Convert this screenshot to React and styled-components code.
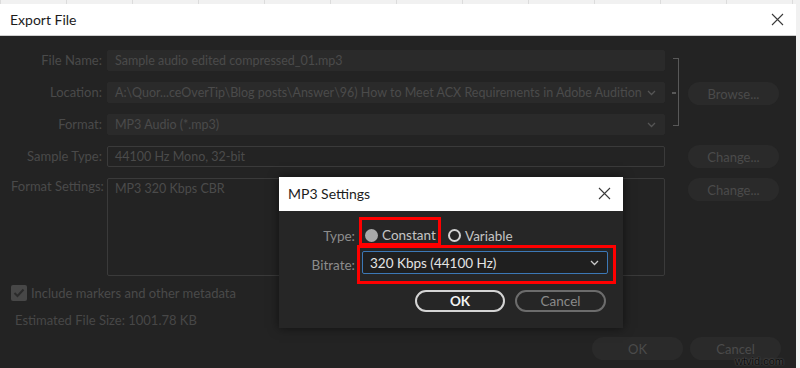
import styled, { createGlobalStyle } from "styled-components";

const GlobalStyle = createGlobalStyle`
  html, body {
    margin: 0;
    padding: 0;
  }
  body {
    width: 800px;
    height: 368px;
    overflow: hidden;
    background: #f1f1f1;
    background-image: repeating-linear-gradient(90deg, #dcdcdc 0 1px, transparent 1px 66px);
    font-family: Lato, "Noto Sans", sans-serif;
  }
`;

const Window = styled.div`
  position: relative;
  margin-top: 4px;
  width: 796px;
  height: 364px;
  background: #232323;
  display: flex;
  flex-direction: column;
`;

const TitleBar = styled.div`
  flex: 0 0 auto;
  box-sizing: border-box;
  height: ${(p) => p.$h || 32}px;
  background: #fff;
  border-bottom: 1px solid ${(p) => p.$line || "#cfcfcf"};
  display: flex;
  align-items: center;
  justify-content: space-between;
  padding: 0 ${(p) => p.$pr || 12}px 0 ${(p) => p.$pl || 10}px;
`;

const Title = styled.span`
  font-family: Lato, "Noto Sans", sans-serif;
  font-size: 14px;
  color: #1c1c1c;
`;

const Close = () => (
  <svg width="13" height="13" viewBox="0 0 13 13">
    <path d="M1 1 L12 12 M12 1 L1 12" stroke="#3a3a3a" strokeWidth="1.1" fill="none" />
  </svg>
);

const Chevron = ({ color = "#555" }) => (
  <svg width="9" height="6" viewBox="0 0 9 6">
    <polyline points="1,1 4.5,4.5 8,1" stroke={color} strokeWidth="1.3" fill="none" />
  </svg>
);

const Body = styled.div`
  flex: 1;
  padding: 14px 17px 0 11px;
  display: flex;
  flex-direction: column;
`;

const FieldGrid = styled.div`
  display: grid;
  grid-template-columns: 96px 558px 23px 91px;
  grid-template-rows: 21px 21px 21px 21px 98px;
  row-gap: 11px;
`;

const Label = styled.div`
  grid-column: 1;
  text-align: right;
  padding-right: 5px;
  font-size: 13px;
  line-height: ${(p) => (p.$top ? "17px" : "21px")};
  align-self: ${(p) => (p.$top ? "start" : "center")};
  color: #4a4a4a;
  white-space: nowrap;
`;

const Field = styled.div`
  grid-column: 2;
  box-sizing: border-box;
  display: flex;
  align-items: ${(p) => (p.$area ? "flex-start" : "center")};
  justify-content: space-between;
  padding: ${(p) => (p.$area ? "2px 7px" : "0 8px 0 7px")};
  background: ${(p) => (p.$outlined ? "transparent" : "#2a2a2a")};
  border: 1px solid ${(p) => (p.$outlined ? "#3a3a3a" : "#2a2a2a")};
  border-radius: 2px;
  font-size: 12.5px;
  color: #4b4b4b;
  white-space: nowrap;
  overflow: hidden;
`;

const Bracket = styled.div`
  grid-column: 3;
  grid-row: 1 / 4;
  position: relative;
  margin: 8px 0 9px 8px;
  width: 5px;
  border: 1.5px solid #585858;
  border-left: none;

  &::after {
    content: "";
    position: absolute;
    left: -1px;
    top: 50%;
    width: 4px;
    height: 1.5px;
    background: #585858;
  }
`;

const PillButton = styled.div`
  grid-column: ${(p) => p.$col || "auto"};
  grid-row: ${(p) => p.$row || "auto"};
  align-self: start;
  box-sizing: border-box;
  width: 91px;
  height: 23px;
  margin-top: ${(p) => p.$mt || 0}px;
  border-radius: 12px;
  background: #2a2a2a;
  color: #4b4b4b;
  font-size: 13px;
  display: flex;
  align-items: center;
  justify-content: center;
`;

const CheckRow = styled.div`
  margin-top: 9px;
  height: 16px;
  display: flex;
  align-items: center;
  gap: 4px;
  font-size: 13px;
  color: #4a4a4a;
`;

const CheckBox = styled.div`
  width: 16px;
  height: 16px;
  border-radius: 2px;
  background: #474747;
  display: flex;
  align-items: center;
  justify-content: center;
`;

const Estimate = styled.div`
  margin-top: 11px;
  padding-left: 4px;
  line-height: 16px;
  font-size: 13px;
  color: #474747;
`;

const Footer = styled.div`
  margin-top: 9px;
  margin-right: -2px;
  display: flex;
  justify-content: flex-end;
  gap: 7px;
`;

/* MP3 settings sub-dialog */

const Popup = styled.div`
  position: absolute;
  left: 279px;
  top: 173px;
  width: 344px;
  height: 151px;
  display: flex;
  flex-direction: column;
  background: #262626;
  box-shadow: 0 0 10px rgba(0, 0, 0, 0.55);
`;

const PopupBody = styled.div`
  padding: 6px 7px 0 0;
  display: grid;
  grid-template-columns: 78px 1fr;
  align-items: center;
`;

const PopupLabel = styled.div`
  text-align: right;
  padding-right: 2px;
  padding-top: ${(p) => p.$pt || 0}px;
  font-size: 13.5px;
  color: #8c8c8c;
`;

const Highlight = styled.div`
  box-sizing: border-box;
  border: 3px solid #f00;
  display: flex;
  align-items: center;
`;

const TypeHighlight = styled(Highlight)`
  width: 82px;
  height: 29px;
  margin-left: 2px;
  padding: 7px 0 0 3px;
  gap: 4px;
`;

const RateHighlight = styled(Highlight)`
  width: 259px;
  height: 39px;
  margin-top: -1px;
  padding: 3px 5px 7px 2px;
`;

const TypeRow = styled.div`
  display: flex;
  align-items: center;
`;

const Radio = styled.span`
  box-sizing: border-box;
  width: 13px;
  height: 13px;
  border-radius: 50%;
  background: ${(p) => (p.$checked ? "#a9a9a9" : "transparent")};
  border: ${(p) => (p.$checked ? "none" : "2px solid #d2d2d2")};
`;

const Option = styled.span`
  font-size: 13.5px;
  color: #c4c4c4;
`;

const VariableOption = styled.div`
  margin: 8px 0 0 7px;
  display: flex;
  align-items: center;
  gap: 4px;
`;

const Select = styled.div`
  box-sizing: border-box;
  flex: 1;
  height: 23px;
  border: 1px solid #3c78b6;
  border-radius: 2px;
  background: #1f1f1f;
  display: flex;
  align-items: center;
  justify-content: space-between;
  padding: 0 8px 0 7px;
  font-size: 13.5px;
  color: #e4e4e4;
`;

const PopupButtons = styled.div`
  grid-column: 1 / -1;
  justify-self: end;
  margin: 6px 10px 0 0;
  display: flex;
  gap: 10px;
`;

const OutlineButton = styled.div`
  box-sizing: border-box;
  width: ${(p) => p.$w}px;
  height: 22px;
  border-radius: 12px;
  border: 2px solid ${(p) => (p.$primary ? "#d4d4d4" : "#6c6c6c")};
  color: ${(p) => (p.$primary ? "#f2f2f2" : "#8a8a8a")};
  font-weight: ${(p) => (p.$primary ? 700 : 400)};
  font-size: 13.5px;
  display: flex;
  align-items: center;
  justify-content: center;
`;

const Watermark = styled.div`
  position: absolute;
  right: 12px;
  bottom: 1px;
  font-family: "Liberation Sans", Arial, sans-serif;
  font-size: 11px;
  color: #0c0c0c;
  text-shadow: 0 0 2px rgba(255, 255, 255, 0.35);
`;

export default function App() {
  return (
    <>
      <GlobalStyle />
      <Window>
        <TitleBar>
          <Title>Export File</Title>
          <Close />
        </TitleBar>
        <Body>
          <FieldGrid>
            <Label>File Name:</Label>
            <Field>Sample audio edited compressed_01.mp3</Field>
            <Bracket />

            <Label>Location:</Label>
            <Field>
              A:\Quor...ceOverTip\Blog posts\Answer\96) How to Meet ACX Requirements in Adobe Audition
              <Chevron />
            </Field>
            <PillButton $col={4} $row={2}>Browse...</PillButton>

            <Label>Format:</Label>
            <Field>
              MP3 Audio (*.mp3)
              <Chevron />
            </Field>

            <Label>Sample Type:</Label>
            <Field $outlined>44100 Hz Mono, 32-bit</Field>
            <PillButton $col={4} $row={4} $mt={-1}>Change...</PillButton>

            <Label $top>Format Settings:</Label>
            <Field $outlined $area>MP3 320 Kbps CBR</Field>
            <PillButton $col={4} $row={5}>Change...</PillButton>
          </FieldGrid>

          <CheckRow>
            <CheckBox>
              <svg width="12" height="10" viewBox="0 0 12 10">
                <polyline points="1.5,5 4.5,8 10.5,1.5" stroke="#2b2b2b" strokeWidth="2" fill="none" />
              </svg>
            </CheckBox>
            Include markers and other metadata
          </CheckRow>
          <Estimate>Estimated File Size: 1001.78 KB</Estimate>

          <Footer>
            <PillButton>OK</PillButton>
            <PillButton>Cancel</PillButton>
          </Footer>
        </Body>

        <Popup>
          <TitleBar $h={34} $pl={9} $pr={12} $line="#fff">
            <Title>MP3 Settings</Title>
            <Close />
          </TitleBar>
          <PopupBody>
            <PopupLabel $pt={8}>Type:</PopupLabel>
            <TypeRow>
              <TypeHighlight>
                <Radio $checked />
                <Option>Constant</Option>
              </TypeHighlight>
              <VariableOption>
                <Radio />
                <Option>Variable</Option>
              </VariableOption>
            </TypeRow>

            <PopupLabel>Bitrate:</PopupLabel>
            <RateHighlight>
              <Select>
                320 Kbps (44100 Hz)
                <Chevron color="#c8c8c8" />
              </Select>
            </RateHighlight>

            <PopupButtons>
              <OutlineButton $w={90} $primary>OK</OutlineButton>
              <OutlineButton $w={91}>Cancel</OutlineButton>
            </PopupButtons>
          </PopupBody>
        </Popup>

        <Watermark>wtvid.com</Watermark>
      </Window>
    </>
  );
}
